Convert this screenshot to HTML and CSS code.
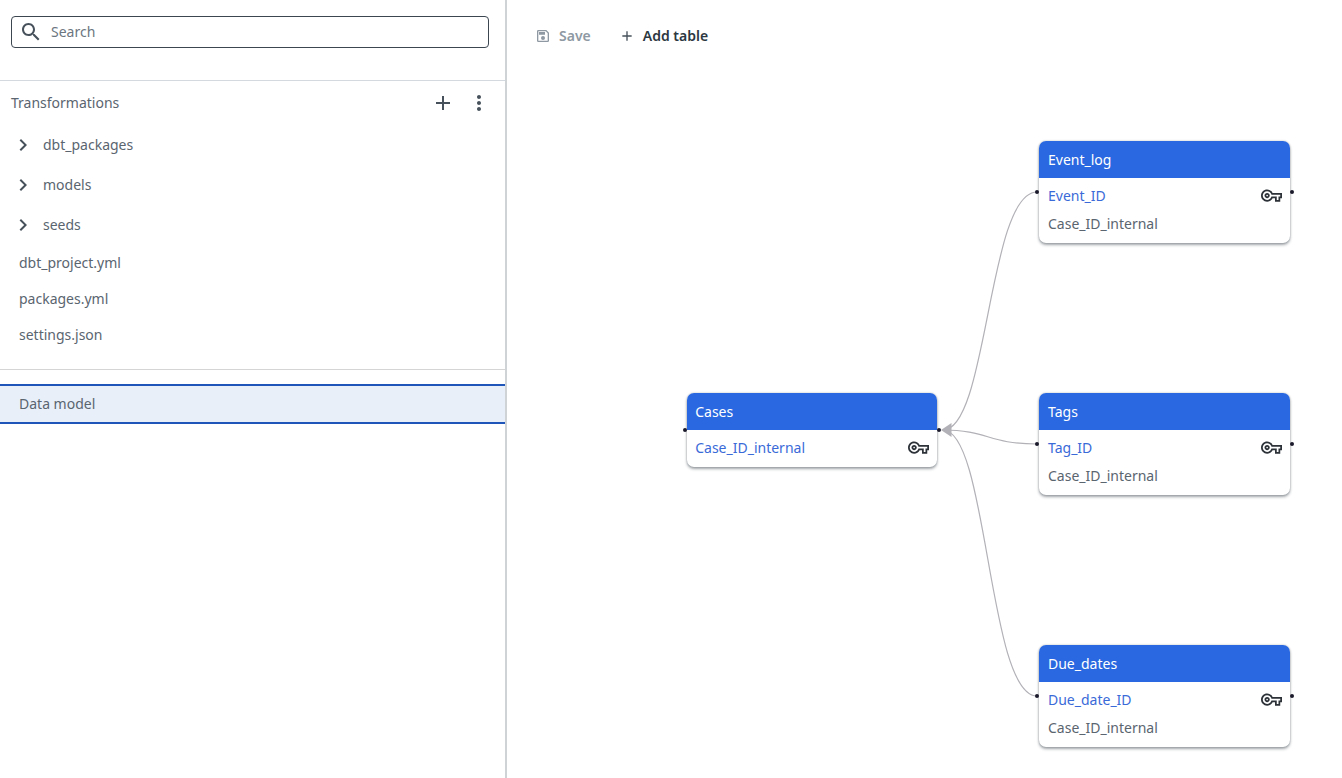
FILE: index.html
```html
<!DOCTYPE html>
<html lang="en">
<head>
  <meta charset="UTF-8" />
  <title>Data model</title>
  <link rel="stylesheet" href="styles.css">
</head>
<body>

<aside class="sidebar">
  <div class="search-wrap">
    <div class="search-box">
      <svg class="search-icon" viewBox="0 0 24 24"><path d="M15.5 14h-.79l-.28-.27C15.41 12.59 16 11.11 16 9.5 16 5.91 13.09 3 9.5 3S3 5.91 3 9.5 5.91 16 9.5 16c1.61 0 3.09-.59 4.23-1.57l.27.28v.79l5 4.99L20.49 19l-4.99-5zm-6 0C7.01 14 5 11.99 5 9.5S7.01 5 9.5 5 14 7.01 14 9.5 11.99 14 9.5 14z"/></svg>
      <span class="search-text">Search</span>
    </div>
  </div>

  <div class="tree">
    <div class="tree-head">
      <span>Transformations</span>
      <div class="tree-actions">
        <svg class="icon-add" viewBox="0 0 24 24"><path d="M19 13h-6v6h-2v-6H5v-2h6V5h2v6h6v2z"/></svg>
        <svg class="icon-more" viewBox="0 0 24 24"><path d="M12 8c1.1 0 2-.9 2-2s-.9-2-2-2-2 .9-2 2 .9 2 2 2zm0 2c-1.1 0-2 .9-2 2s.9 2 2 2 2-.9 2-2-.9-2-2-2zm0 6c-1.1 0-2 .9-2 2s.9 2 2 2 2-.9 2-2-.9-2-2-2z"/></svg>
      </div>
    </div>
    <div class="folder"><svg viewBox="0 0 24 24"><path d="M8.59 16.59 13.17 12 8.59 7.41 10 6l6 6-6 6z"/></svg>dbt_packages</div>
    <div class="folder"><svg viewBox="0 0 24 24"><path d="M8.59 16.59 13.17 12 8.59 7.41 10 6l6 6-6 6z"/></svg>models</div>
    <div class="folder"><svg viewBox="0 0 24 24"><path d="M8.59 16.59 13.17 12 8.59 7.41 10 6l6 6-6 6z"/></svg>seeds</div>
    <div class="file">dbt_project.yml</div>
    <div class="file">packages.yml</div>
    <div class="file">settings.json</div>
  </div>

  <div class="data-model">Data model</div>
</aside>

<main class="canvas">
  <div class="toolbar">
    <button class="tool-btn disabled">
      <svg viewBox="0 0 24 24"><path d="M17 3H5a2 2 0 0 0-2 2v14a2 2 0 0 0 2 2h14a2 2 0 0 0 2-2V7l-4-4zm2 16H5V5h11.17L19 7.83V19zm-7-7a3 3 0 1 0 0 6 3 3 0 0 0 0-6zM6 6h9v4H6V6z"/></svg>
      Save
    </button>
    <button class="tool-btn">
      <svg viewBox="0 0 24 24"><path d="M19 13h-6v6h-2v-6H5v-2h6V5h2v6h6v2z"/></svg>
      Add table
    </button>
  </div>

  <!-- links between the tables -->
  <svg class="edges" width="835" height="778" viewBox="0 0 835 778">
    <path d="M530 192 C481 192 481 430 436 430" />
    <path d="M530 444 C481 444 481 430 436 430" />
    <path d="M530 696 C481 696 481 430 436 430" />
    <polygon points="434,430 444.5,423 444.5,437" />
  </svg>

  <section class="table-node node-cases">
    <span class="dot dot-left"></span><span class="dot dot-right"></span>
    <header class="node-title">Cases</header>
    <div class="node-row key-row">Case_ID_internal
      <svg class="key" viewBox="0 0 24 24"><use href="#key-shape"/></svg>
    </div>
  </section>

  <section class="table-node node-events">
    <span class="dot dot-left"></span><span class="dot dot-right"></span>
    <header class="node-title">Event_log</header>
    <div class="node-row key-row">Event_ID
      <svg class="key" viewBox="0 0 24 24"><use href="#key-shape"/></svg>
    </div>
    <div class="node-row">Case_ID_internal</div>
  </section>

  <section class="table-node node-tags">
    <span class="dot dot-left"></span><span class="dot dot-right"></span>
    <header class="node-title">Tags</header>
    <div class="node-row key-row">Tag_ID
      <svg class="key" viewBox="0 0 24 24"><use href="#key-shape"/></svg>
    </div>
    <div class="node-row">Case_ID_internal</div>
  </section>

  <section class="table-node node-dates">
    <span class="dot dot-left"></span><span class="dot dot-right"></span>
    <header class="node-title">Due_dates</header>
    <div class="node-row key-row">Due_date_ID
      <svg class="key" viewBox="0 0 24 24"><use href="#key-shape"/></svg>
    </div>
    <div class="node-row">Case_ID_internal</div>
  </section>
</main>

<svg class="defs" width="0" height="0">
  <defs>
    <path id="key-shape" d="M22 19h-6v-4h-2.68c-1.14 2.42-3.6 4-6.32 4-3.86 0-7-3.14-7-7s3.14-7 7-7c2.72 0 5.17 1.58 6.32 4H24v6h-2v4zm-4-2h2v-4h2v-2H11.94l-.23-.67C11.01 8.34 9.11 7 7 7c-2.76 0-5 2.24-5 5s2.24 5 5 5c2.11 0 4.01-1.34 4.71-3.33l.23-.67H18v4zM7 15c-1.65 0-3-1.35-3-3s1.35-3 3-3 3 1.35 3 3-1.35 3-3 3zm0-4c-.55 0-1 .45-1 1s.45 1 1 1 1-.45 1-1-.45-1-1-1z"/>
  </defs>
</svg>

</body>
</html>
```

FILE: styles.css
```css
* {
  box-sizing: border-box;
}
body {
  margin: 0;
  height: 778px;
  display: flex;
  overflow: hidden;
  background: white;
  font-family: "Noto Sans", sans-serif;
  font-size: 14px;
  color: #5a6570;
}

/* sidebar */
.sidebar {
  width: 507px;
  flex: none;
  border-right: 2px solid #d0d3d6;
}
.search-wrap {
  padding: 16px 16px 32px 11px;
  border-bottom: 1px solid #d3d9df;
  height: 81px;
}
.search-box {
  display: flex;
  align-items: center;
  height: 32px;
  border: 1px solid #3b4650;
  border-radius: 4px;
  padding-left: 7px;
  padding-bottom: 2px;
}
.search-icon {
  width: 24px;
  height: 24px;
  margin-top: 2px;
  fill: #46515b;
}
.search-text {
  margin-left: 8px;
  color: #6c7680;
}

.tree {
  height: 289px;
  border-bottom: 1px solid #d5d5d5;
}
.tree-head {
  display: flex;
  justify-content: space-between;
  align-items: center;
  height: 44px;
  padding: 0 14px 2px 11px;
}
.tree-actions {
  display: flex;
  gap: 12px;
  margin-top: 2px;
}
.tree-actions svg {
  width: 24px;
  height: 24px;
  fill: #46515b;
}
.folder {
  display: flex;
  align-items: center;
  height: 40px;
  padding: 0 0 2px 11px;
}
.folder svg {
  width: 24px;
  height: 24px;
  margin: 2px 8px 0 0;
  fill: #46515b;
}
.file {
  display: flex;
  align-items: center;
  height: 36px;
  padding: 0 0 2px 19px;
}
.data-model {
  display: flex;
  align-items: center;
  height: 40px;
  margin-top: 14px;
  padding: 0 0 2px 19px;
  background: #e8eff9;
  border-top: 2px solid #1f55b8;
  border-bottom: 2px solid #1f55b8;
}

/* canvas */
.canvas {
  position: relative;
  flex: 1;
}
.toolbar {
  display: flex;
  gap: 28px;
  padding: 25px 0 0 28px;
}
.tool-btn {
  display: flex;
  align-items: center;
  gap: 8px;
  height: 20px;
  padding: 0;
  border: none;
  background: none;
  font-family: inherit;
  font-size: 14px;
  font-weight: 600;
  color: #2c3741;
}
.tool-btn svg {
  width: 16px;
  height: 16px;
  margin-top: 2px;
  fill: #46515b;
}
.tool-btn.disabled {
  color: #8e99a3;
}
.tool-btn.disabled svg {
  fill: #8e99a3;
}
.edges {
  position: absolute;
  left: 0;
  top: 0;
}
.edges path {
  fill: none;
  stroke: #b1b1b7;
  stroke-width: 1.2;
}
.edges polygon {
  fill: #b1b1b7;
}
.defs {
  position: absolute;
}

/* table nodes */
.table-node {
  position: absolute;
  width: 251px;
  padding-bottom: 6px;
  background: white;
  border-radius: 7px;
  box-shadow: 0 0 2px rgba(30, 40, 50, 0.3), 0 2px 3px rgba(30, 40, 50, 0.4);
}
.node-cases { left: 179.7px; top: 393px; width: 250px; }
.node-events { left: 532px; top: 141px; }
.node-tags { left: 532px; top: 393px; }
.node-dates { left: 532px; top: 645px; }

.node-title {
  display: flex;
  align-items: center;
  height: 37px;
  margin-bottom: 3px;
  padding-left: 9px;
  background: #2968e0;
  border-radius: 7px 7px 0 0;
  color: white;
}
.node-row {
  display: flex;
  align-items: center;
  justify-content: space-between;
  height: 28px;
  padding: 0 8px 0 9px;
}
.node-cases .node-title,
.node-cases .node-row {
  padding-left: 8.5px;
}
.key-row {
  color: #3a6ad8;
}
.key {
  width: 21px;
  height: 21px;
  fill: #2c3238;
}
.dot {
  position: absolute;
  top: 49px;
  width: 4px;
  height: 4px;
  border-radius: 50%;
  background: #1a192b;
}
.dot-left { left: -4px; }
.dot-right { right: -4px; }
.node-cases .dot { top: 35px; }
```
